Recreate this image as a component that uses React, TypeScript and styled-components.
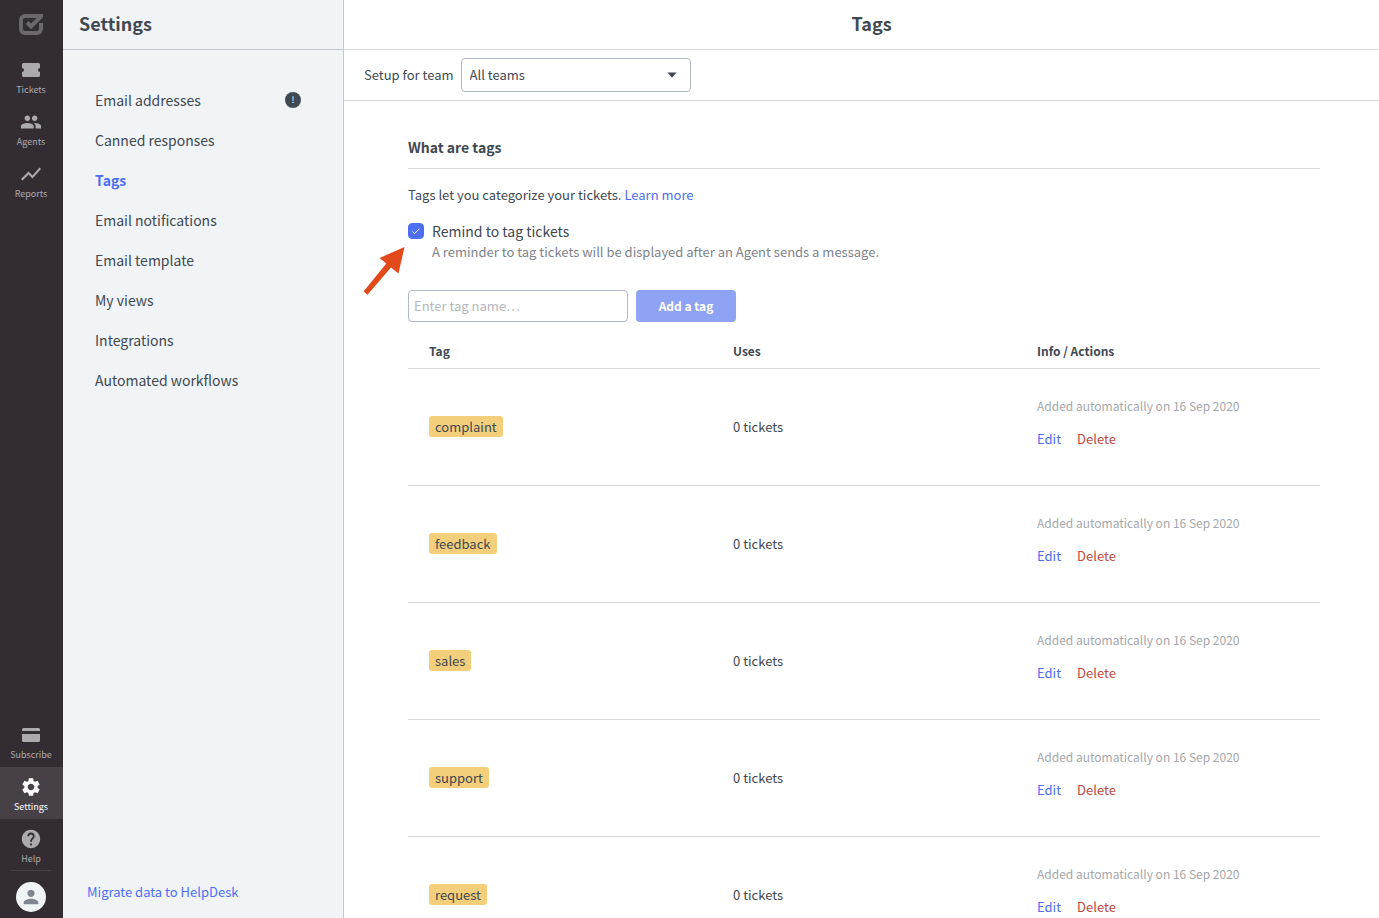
import React from "react";
import styled, { createGlobalStyle } from "styled-components";
import { MdHelp, MdPeople, MdPerson, MdSettings, MdShowChart } from "react-icons/md";

const color = {
  ink: "#404852",
  blue: "#4d6ef2",
  red: "#bf4a3f",
  line: "#d6d8de",
  control: "#b0b9c9",
  panel: "#f0f4f7",
  rail: "#332d33",
  railActive: "#474147",
  railIcon: "#adaaad",
};

const GlobalStyle = createGlobalStyle`
  *, *::before, *::after { box-sizing: border-box; }
  body {
    margin: 0;
    background: #fff;
    color: ${color.ink};
    font-family: "Noto Sans CJK SC", "Noto Sans", sans-serif;
    font-size: 13px;
    line-height: 20px;
  }
  button, input, select { font: inherit; color: inherit; }
  h1, h2, p, ul { margin: 0; padding: 0; }
  ul { list-style: none; }
  a { text-decoration: none; }
`;

const Page = styled.div`
  display: flex;
  height: 100vh;
  overflow: hidden;
`;

const Rail = styled.nav`
  display: flex;
  flex-direction: column;
  flex: none;
  width: 63px;
  background: ${color.rail};
`;

const Logo = styled.a`
  display: flex;
  justify-content: center;
  align-items: center;
  height: 50px;
  padding: 0 1px 2px 0;
  color: #6b676c;
`;

const RailLink = styled.a<{ $active?: boolean }>`
  display: flex;
  flex-direction: column;
  align-items: center;
  height: 52px;
  padding: 8px 1px 0 0;
  font-size: 9px;
  line-height: 16px;
  color: ${(p) => (p.$active ? "#fff" : color.railIcon)};
  background: ${(p) => (p.$active ? color.railActive : "transparent")};
`;

const RailIcon = styled.span`
  display: flex;
  align-items: center;
  justify-content: center;
  height: 24px;
`;

const Spacer = styled.div`
  flex: 1;
`;

const RailFoot = styled.div`
  display: flex;
  justify-content: center;
  margin: -1px 12px 0 11px;
  padding: 11px 0 6px;
  border-top: 1px solid ${color.railActive};
`;

const Avatar = styled.button`
  display: flex;
  align-items: center;
  justify-content: center;
  width: 30px;
  height: 30px;
  padding: 0;
  border: 0;
  border-radius: 50%;
  background: ${color.panel};
  color: #808791;
`;

const Panel = styled.aside`
  display: flex;
  flex-direction: column;
  flex: none;
  width: 281px;
  background: ${color.panel};
  border-right: 1px solid #c3c7d0;
`;

const PanelTitle = styled.h2`
  height: 50px;
  padding: 0 16px;
  border-bottom: 1px solid #c3c7d0;
  font-size: 18px;
  font-weight: 700;
  line-height: 46px;
`;

const Menu = styled.ul`
  flex: 1;
  padding: 30px 42px 0 32px;
`;

const MenuLink = styled.a<{ $active?: boolean }>`
  display: flex;
  align-items: center;
  justify-content: space-between;
  height: 40px;
  font-size: 14px;
  font-weight: ${(p) => (p.$active ? 700 : 400)};
  color: ${(p) => (p.$active ? color.blue : color.ink)};
`;

const Badge = styled.span`
  width: 16px;
  height: 16px;
  border-radius: 50%;
  background: ${color.ink};
  color: #fff;
  font-size: 9px;
  line-height: 16px;
  text-align: center;
`;

const PanelFoot = styled.div`
  padding: 0 24px 16px;
`;

const Link = styled.a`
  color: ${color.blue};
`;

const Main = styled.main`
  display: flex;
  flex-direction: column;
  flex: 1;
  min-width: 0;
`;

const TopBar = styled.header`
  flex: none;
  height: 50px;
  padding-left: 20px;
  border-bottom: 1px solid ${color.line};
  text-align: center;
`;

const Title = styled.h1`
  font-size: 18px;
  font-weight: 700;
  line-height: 46px;
`;

const FilterBar = styled.div`
  display: flex;
  flex: none;
  align-items: center;
  gap: 7px;
  height: 51px;
  padding: 0 20px;
  border-bottom: 1px solid ${color.line};
`;

const SelectBox = styled.div`
  position: relative;
  width: 230px;
`;

const Select = styled.select`
  appearance: none;
  display: block;
  width: 100%;
  height: 34px;
  padding: 0 32px 0 8px;
  border: 1px solid ${color.control};
  border-radius: 4px;
  background: #fff;
`;

const Caret = styled.svg`
  position: absolute;
  top: 14px;
  right: 14px;
  pointer-events: none;
`;

const Content = styled.div`
  flex: 1;
  min-height: 0;
  padding: 32px 59px 32px 64px;
  overflow-y: auto;
  scrollbar-width: none;
`;

const Heading = styled.h2`
  padding: 4px 0 10px;
  border-bottom: 1px solid ${color.line};
  font-size: 14px;
  font-weight: 700;
  line-height: 21px;
`;

const Intro = styled.p`
  margin: 16px 0 17px;
`;

const Reminder = styled.div`
  position: relative;
  display: grid;
  grid-template-columns: 16px 1fr;
  column-gap: 8px;
  align-items: center;
`;

const Tick = styled.span`
  display: grid;
  height: 18px;

  > * { grid-area: 1 / 1; }
  svg { pointer-events: none; }
`;

const TickInput = styled.input`
  appearance: none;
  width: 16px;
  height: 16px;
  margin: 0;
  border: 1px solid ${color.control};
  border-radius: 4px;

  &:checked {
    border-color: ${color.blue};
    background: ${color.blue};
  }
`;

const TickLabel = styled.label`
  padding-bottom: 2px;
  font-size: 14px;
  line-height: 18px;
`;

const Hint = styled.p`
  grid-column: 2;
  color: #7d838b;
`;

const Pointer = styled.svg`
  position: absolute;
  top: 22px;
  left: -46px;
`;

const AddForm = styled.form`
  display: flex;
  gap: 8px;
  margin-top: 28px;
`;

const TagInput = styled.input`
  width: 220px;
  height: 32px;
  padding: 0 5px 2px;
  border: 1px solid ${color.control};
  border-radius: 4px;

  &::placeholder { color: #b4b7bb; opacity: 1; }
`;

const AddButton = styled.button`
  width: 100px;
  height: 32px;
  padding: 0;
  border: 0;
  border-radius: 4px;
  background: #8fa3f5;
  color: #fff;
  font-size: 12px;
  font-weight: 700;
`;

const Table = styled.table`
  width: 100%;
  margin-top: 12px;
  border-collapse: collapse;
  table-layout: fixed;
`;

const HeadCell = styled.th`
  height: 34px;
  padding: 0 21px;
  border-bottom: 1px solid ${color.line};
  font-size: 12px;
  font-weight: 700;
  text-align: left;
`;

const Cell = styled.td`
  height: 117px;
  padding: 0 21px;
  border-bottom: 1px solid ${color.line};
`;

const Tag = styled.span`
  display: inline-block;
  padding: 0 6px;
  border-radius: 3px;
  background: #f3cf7c;
  line-height: 21px;
`;

const InfoCell = styled(Cell)`
  padding-bottom: 8px;
`;

const Info = styled.p`
  margin-bottom: 13px;
  font-size: 12px;
  color: #a4a7ab;
`;

const Actions = styled.div`
  display: flex;
  gap: 16px;
`;

const Action = styled.button<{ $danger?: boolean }>`
  padding: 0;
  border: 0;
  background: none;
  color: ${(p) => (p.$danger ? color.red : color.blue)};
`;

const menu = [
  "Email addresses",
  "Canned responses",
  "Tags",
  "Email notifications",
  "Email template",
  "My views",
  "Integrations",
  "Automated workflows",
];

const tags = ["complaint", "feedback", "sales", "support", "request"];

const TicketIcon = () => (
  <svg width="18" height="14" viewBox="0 0 18 14" fill="currentColor" aria-hidden="true">
    <path d="M1.5 0h15A1.5 1.5 0 0 1 18 1.500V5a2 2 0 0 0 0 4v3.500a1.500 1.500 0 0 1-1.500 1.500h-15A1.500 1.500 0 0 1 0 12.500V9a2 2 0 0 0 0-4V1.500A1.500 1.500 0 0 1 1.500 0z" />
  </svg>
);

const CardIcon = () => (
  <svg width="18" height="14" viewBox="0 0 18 14" fill="currentColor" aria-hidden="true">
    <path d="M1.500 0h15A1.500 1.500 0 0 1 18 1.500V3H0V1.500A1.500 1.500 0 0 1 1.500 0zM0 6h18v6.500a1.500 1.500 0 0 1-1.500 1.500h-15A1.500 1.500 0 0 1 0 12.500z" />
  </svg>
);

type RailItemProps = { label: string; active?: boolean; children: React.ReactNode };

const RailItem = ({ label, active, children }: RailItemProps) => (
  <RailLink href="#" $active={active}>
    <RailIcon>{children}</RailIcon>
    {label}
  </RailLink>
);

export default function App() {
  return (
    <>
      <GlobalStyle />
      <Page>
        <Rail>
          <Logo href="#" aria-label="HelpDesk">
            <svg width="24" height="21" viewBox="0 0 24 21" fill="none" stroke="currentColor" aria-hidden="true">
              <path d="M22 2H6a4 4 0 0 0-4 4v9a4 4 0 0 0 4 4h12a4 4 0 0 0 4-4V9" strokeWidth="4" />
              <path d="M8 8.500l4 4L22.500 2" strokeWidth="4" />
              <path d="M20 0h4v4z" fill="currentColor" stroke="none" />
            </svg>
          </Logo>
          <RailItem label="Tickets"><TicketIcon /></RailItem>
          <RailItem label="Agents"><MdPeople size={22} /></RailItem>
          <RailItem label="Reports"><MdShowChart size={24} /></RailItem>
          <Spacer />
          <RailItem label="Subscribe"><CardIcon /></RailItem>
          <RailItem label="Settings" active><MdSettings size={22} /></RailItem>
          <RailItem label="Help"><MdHelp size={22} /></RailItem>
          <RailFoot>
            <Avatar type="button" aria-label="Account"><MdPerson size={22} /></Avatar>
          </RailFoot>
        </Rail>

        <Panel>
          <PanelTitle>Settings</PanelTitle>
          <Menu>
            {menu.map((item) => (
              <li key={item}>
                <MenuLink href="#" $active={item === "Tags"}>
                  {item}
                  {item === "Email addresses" && <Badge>!</Badge>}
                </MenuLink>
              </li>
            ))}
          </Menu>
          <PanelFoot>
            <Link href="#">Migrate data to HelpDesk</Link>
          </PanelFoot>
        </Panel>

        <Main>
          <TopBar>
            <Title>Tags</Title>
          </TopBar>
          <FilterBar>
            <label htmlFor="team">Setup for team</label>
            <SelectBox>
              <Select id="team">
                <option>All teams</option>
              </Select>
              <Caret width="10" height="6" viewBox="0 0 10 6" fill={color.ink} aria-hidden="true">
                <path d="M0.500 0.500h9L5 5.800z" />
              </Caret>
            </SelectBox>
          </FilterBar>
          <Content>
            <Heading>What are tags</Heading>
            <Intro>
              Tags let you categorize your tickets. <Link href="#">Learn more</Link>
            </Intro>
            <Reminder>
              <Tick>
                <TickInput type="checkbox" id="remind" defaultChecked />
                <svg width="16" height="16" viewBox="0 0 16 16" fill="none" stroke="#fff" aria-hidden="true">
                  <path d="M4.500 8.500l2.200 2 4.800-4.800" />
                </svg>
              </Tick>
              <TickLabel htmlFor="remind">Remind to tag tickets</TickLabel>
              <Hint>A reminder to tag tickets will be displayed after an Agent sends a message.</Hint>
              <Pointer width="44" height="52" viewBox="0 0 44 52" fill="#e2491b" aria-hidden="true">
                <path d="M42.500 3L17.500 14l6.800 5.600L1.500 47.500l4 3.300L29 23.500l7.500 6z" />
              </Pointer>
            </Reminder>
            <AddForm onSubmit={(e) => e.preventDefault()}>
              <TagInput type="text" placeholder="Enter tag name…" aria-label="Tag name" />
              <AddButton type="submit">Add a tag</AddButton>
            </AddForm>
            <Table>
              <thead>
                <tr>
                  <HeadCell scope="col">Tag</HeadCell>
                  <HeadCell scope="col">Uses</HeadCell>
                  <HeadCell scope="col">Info / Actions</HeadCell>
                </tr>
              </thead>
              <tbody>
                {tags.map((tag) => (
                  <tr key={tag}>
                    <Cell><Tag>{tag}</Tag></Cell>
                    <Cell>0 tickets</Cell>
                    <InfoCell>
                      <Info>Added automatically on 16 Sep 2020</Info>
                      <Actions>
                        <Action type="button">Edit</Action>
                        <Action type="button" $danger>Delete</Action>
                      </Actions>
                    </InfoCell>
                  </tr>
                ))}
              </tbody>
            </Table>
          </Content>
        </Main>
      </Page>
    </>
  );
}
